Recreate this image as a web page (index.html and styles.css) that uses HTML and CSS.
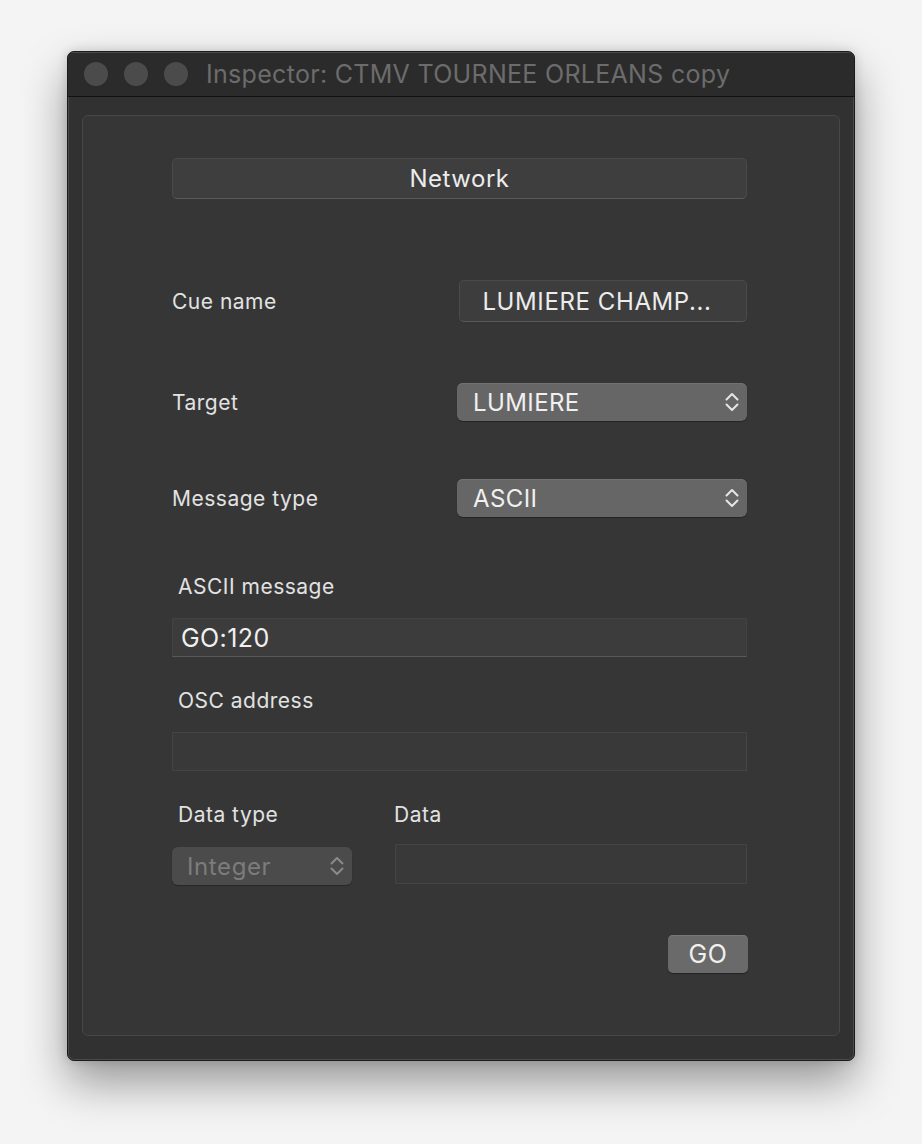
FILE: index.html
```html
<!DOCTYPE html>
<html>
<head>
<meta charset="utf-8">
<link rel="stylesheet" href="styles.css">
</head>
<body>
<div class="window">
  <div class="titlebar">
    <div class="lights"><span class="light"></span><span class="light"></span><span class="light"></span></div>
    <div class="title">Inspector: CTMV TOURNEE ORLEANS copy</div>
  </div>
  <div class="content">
    <div class="panel">
      <div class="btn-wide">Network</div>

      <div class="row row-cue">
        <div class="label">Cue name</div>
        <div class="btn-name">LUMIERE CHAMP...</div>
      </div>

      <div class="row row-target">
        <div class="label">Target</div>
        <div class="popup"><span>LUMIERE</span>
          <svg class="chev" width="16" height="24" viewBox="0 0 16 24"><path d="M2.5 9.5 L8 4 L13.5 9.5 M2.5 14.5 L8 20 L13.5 14.5" fill="none" stroke="#e6e6e6" stroke-width="2" stroke-linecap="round" stroke-linejoin="round"/></svg>
        </div>
      </div>

      <div class="row row-msg">
        <div class="label">Message type</div>
        <div class="popup"><span>ASCII</span>
          <svg class="chev" width="16" height="24" viewBox="0 0 16 24"><path d="M2.5 9.5 L8 4 L13.5 9.5 M2.5 14.5 L8 20 L13.5 14.5" fill="none" stroke="#e6e6e6" stroke-width="2" stroke-linecap="round" stroke-linejoin="round"/></svg>
        </div>
      </div>

      <div class="flabel lbl-ascii">ASCII message</div>
      <div class="field field-ascii">GO:120</div>

      <div class="flabel lbl-osc">OSC address</div>
      <div class="field field-empty"></div>

      <div class="data-labels">
        <div class="flabel dl-type">Data type</div>
        <div class="flabel dl-data">Data</div>
      </div>
      <div class="data-row">
        <div class="popup popup-dis"><span>Integer</span>
          <svg class="chev" width="16" height="24" viewBox="0 0 16 24"><path d="M2.5 9.5 L8 4 L13.5 9.5 M2.5 14.5 L8 20 L13.5 14.5" fill="none" stroke="#8a8a8a" stroke-width="2" stroke-linecap="round" stroke-linejoin="round"/></svg>
        </div>
        <div class="field field-data"></div>
      </div>

      <div class="go-row"><div class="btn-go">GO</div></div>
    </div>
  </div>
</div>
</body>
</html>
```

FILE: styles.css
```css
html, body {
  margin: 0;
  padding: 0;
  background: #f4f4f4;
}
body {
  width: 922px;
  height: 1144px;
  overflow: hidden;
  font-family: Inter, "Liberation Sans", sans-serif;
}
.window {
  margin: 51px 0 0 67px;
  width: 788px;
  height: 1010px;
  box-sizing: border-box;
  border: 1px solid #1b1b1b;
  border-radius: 7px;
  background: #313131;
  box-shadow: 0 22px 45px rgba(0,0,0,0.38), 0 0 12px rgba(0,0,0,0.15), inset 0 0 0 1px #4a4a4a;
  display: flex;
  flex-direction: column;
  overflow: hidden;
}
.titlebar {
  height: 44px;
  flex: none;
  background: #2b2b2b;
  border-bottom: 1px solid #111;
  display: flex;
  align-items: center;
  box-shadow: inset 0 1px 0 #4a4a4a;
}
.lights {
  display: flex;
  gap: 16px;
  margin-left: 16px;
}
.light {
  width: 24px;
  height: 24px;
  border-radius: 50%;
  background: #4b4b4b;
}
.title {
  margin-left: 18px;
  font-size: 25px;
  color: #6c6c6c;
  letter-spacing: 0.3px;
  white-space: nowrap;
}
.content {
  flex: 1;
  display: flex;
  padding: 18px 14px 24px 14px;
}
.panel {
  flex: 1;
  border: 1px solid #474747;
  border-radius: 6px;
  background: #363636;
  padding: 42px 92px 0 89px;
  display: flex;
  flex-direction: column;
  color: #e4e4e4;
}
.btn-wide {
  height: 41px;
  box-sizing: border-box;
  border: 1px solid #4a4a4a;
  border-bottom-color: #5a5a5a;
  border-radius: 5px;
  background: #3e3e3e;
  display: flex;
  align-items: center;
  justify-content: center;
  font-size: 24px;
  letter-spacing: 0.5px;
  color: #ececec;
}
.row {
  display: flex;
  align-items: center;
  justify-content: space-between;
}
.label {
  font-size: 21px;
  letter-spacing: 0.5px;
  color: #e2e2e2;
}
.row-cue { margin-top: 81px; height: 42px; }
.row-target { margin-top: 61px; height: 38px; }
.row-msg { margin-top: 58px; height: 38px; }
.btn-name {
  width: 288px;
  height: 42px;
  box-sizing: border-box;
  border: 1px solid #4a4a4a;
  border-bottom-color: #585858;
  border-radius: 5px;
  background: #3d3d3d;
  display: flex;
  align-items: center;
  justify-content: center;
  padding-right: 12px;
  font-size: 24px;
  letter-spacing: 0.6px;
  color: #ececec;
}
.popup {
  width: 290px;
  height: 38px;
  box-sizing: border-box;
  border-radius: 6px;
  background: #666666;
  box-shadow: 0 1px 1px rgba(0,0,0,0.35), inset 0 1px 0 #727272;
  display: flex;
  align-items: center;
  justify-content: space-between;
  padding: 0 7px 0 16px;
  font-size: 24px;
  letter-spacing: 0.4px;
  color: #f0f0f0;
}
.chev { display: block; }
.flabel {
  font-size: 21px;
  letter-spacing: 0.5px;
  color: #e2e2e2;
  height: 24px;
  line-height: 24px;
  padding-left: 6px;
}
.lbl-ascii { margin-top: 58px; }
.lbl-osc { margin-top: 32px; }
.field {
  box-sizing: border-box;
  height: 39px;
  border: 1px solid #434343;
  border-bottom-color: #5a5a5a;
  background: #3c3c3c;
}
.field-ascii {
  margin-top: 19px;
  font-size: 25px;
  letter-spacing: 0.4px;
  color: #f0f0f0;
  display: flex;
  align-items: center;
  padding-left: 8px;
}
.field-empty {
  margin-top: 19px;
  background: #393939;
  border-color: #444;
}
.data-labels {
  margin-top: 32px;
  display: flex;
}
.dl-type { width: 210px; }
.data-row {
  margin-top: 17px;
  display: flex;
  align-items: flex-start;
  gap: 43px;
}
.popup-dis {
  margin-top: 3px;
  width: 180px;
  background: #4b4b4b;
  box-shadow: 0 1px 1px rgba(0,0,0,0.3);
  color: #7c7c7c;
  padding-left: 15px;
  letter-spacing: 0.6px;
}
.field-data {
  flex: 1;
  height: 40px;
  background: #393939;
  border-color: #444;
}
.go-row {
  margin-top: 50px;
  display: flex;
  justify-content: flex-end;
}
.btn-go {
  width: 80px;
  height: 38px;
  margin-right: -1px;
  border-radius: 5px;
  background: #6a6a6a;
  box-shadow: 0 1px 1px rgba(0,0,0,0.35), inset 0 1px 0 #777;
  display: flex;
  align-items: center;
  justify-content: center;
  font-size: 25px;
  letter-spacing: 0.5px;
  color: #f0f0f0;
}
```
